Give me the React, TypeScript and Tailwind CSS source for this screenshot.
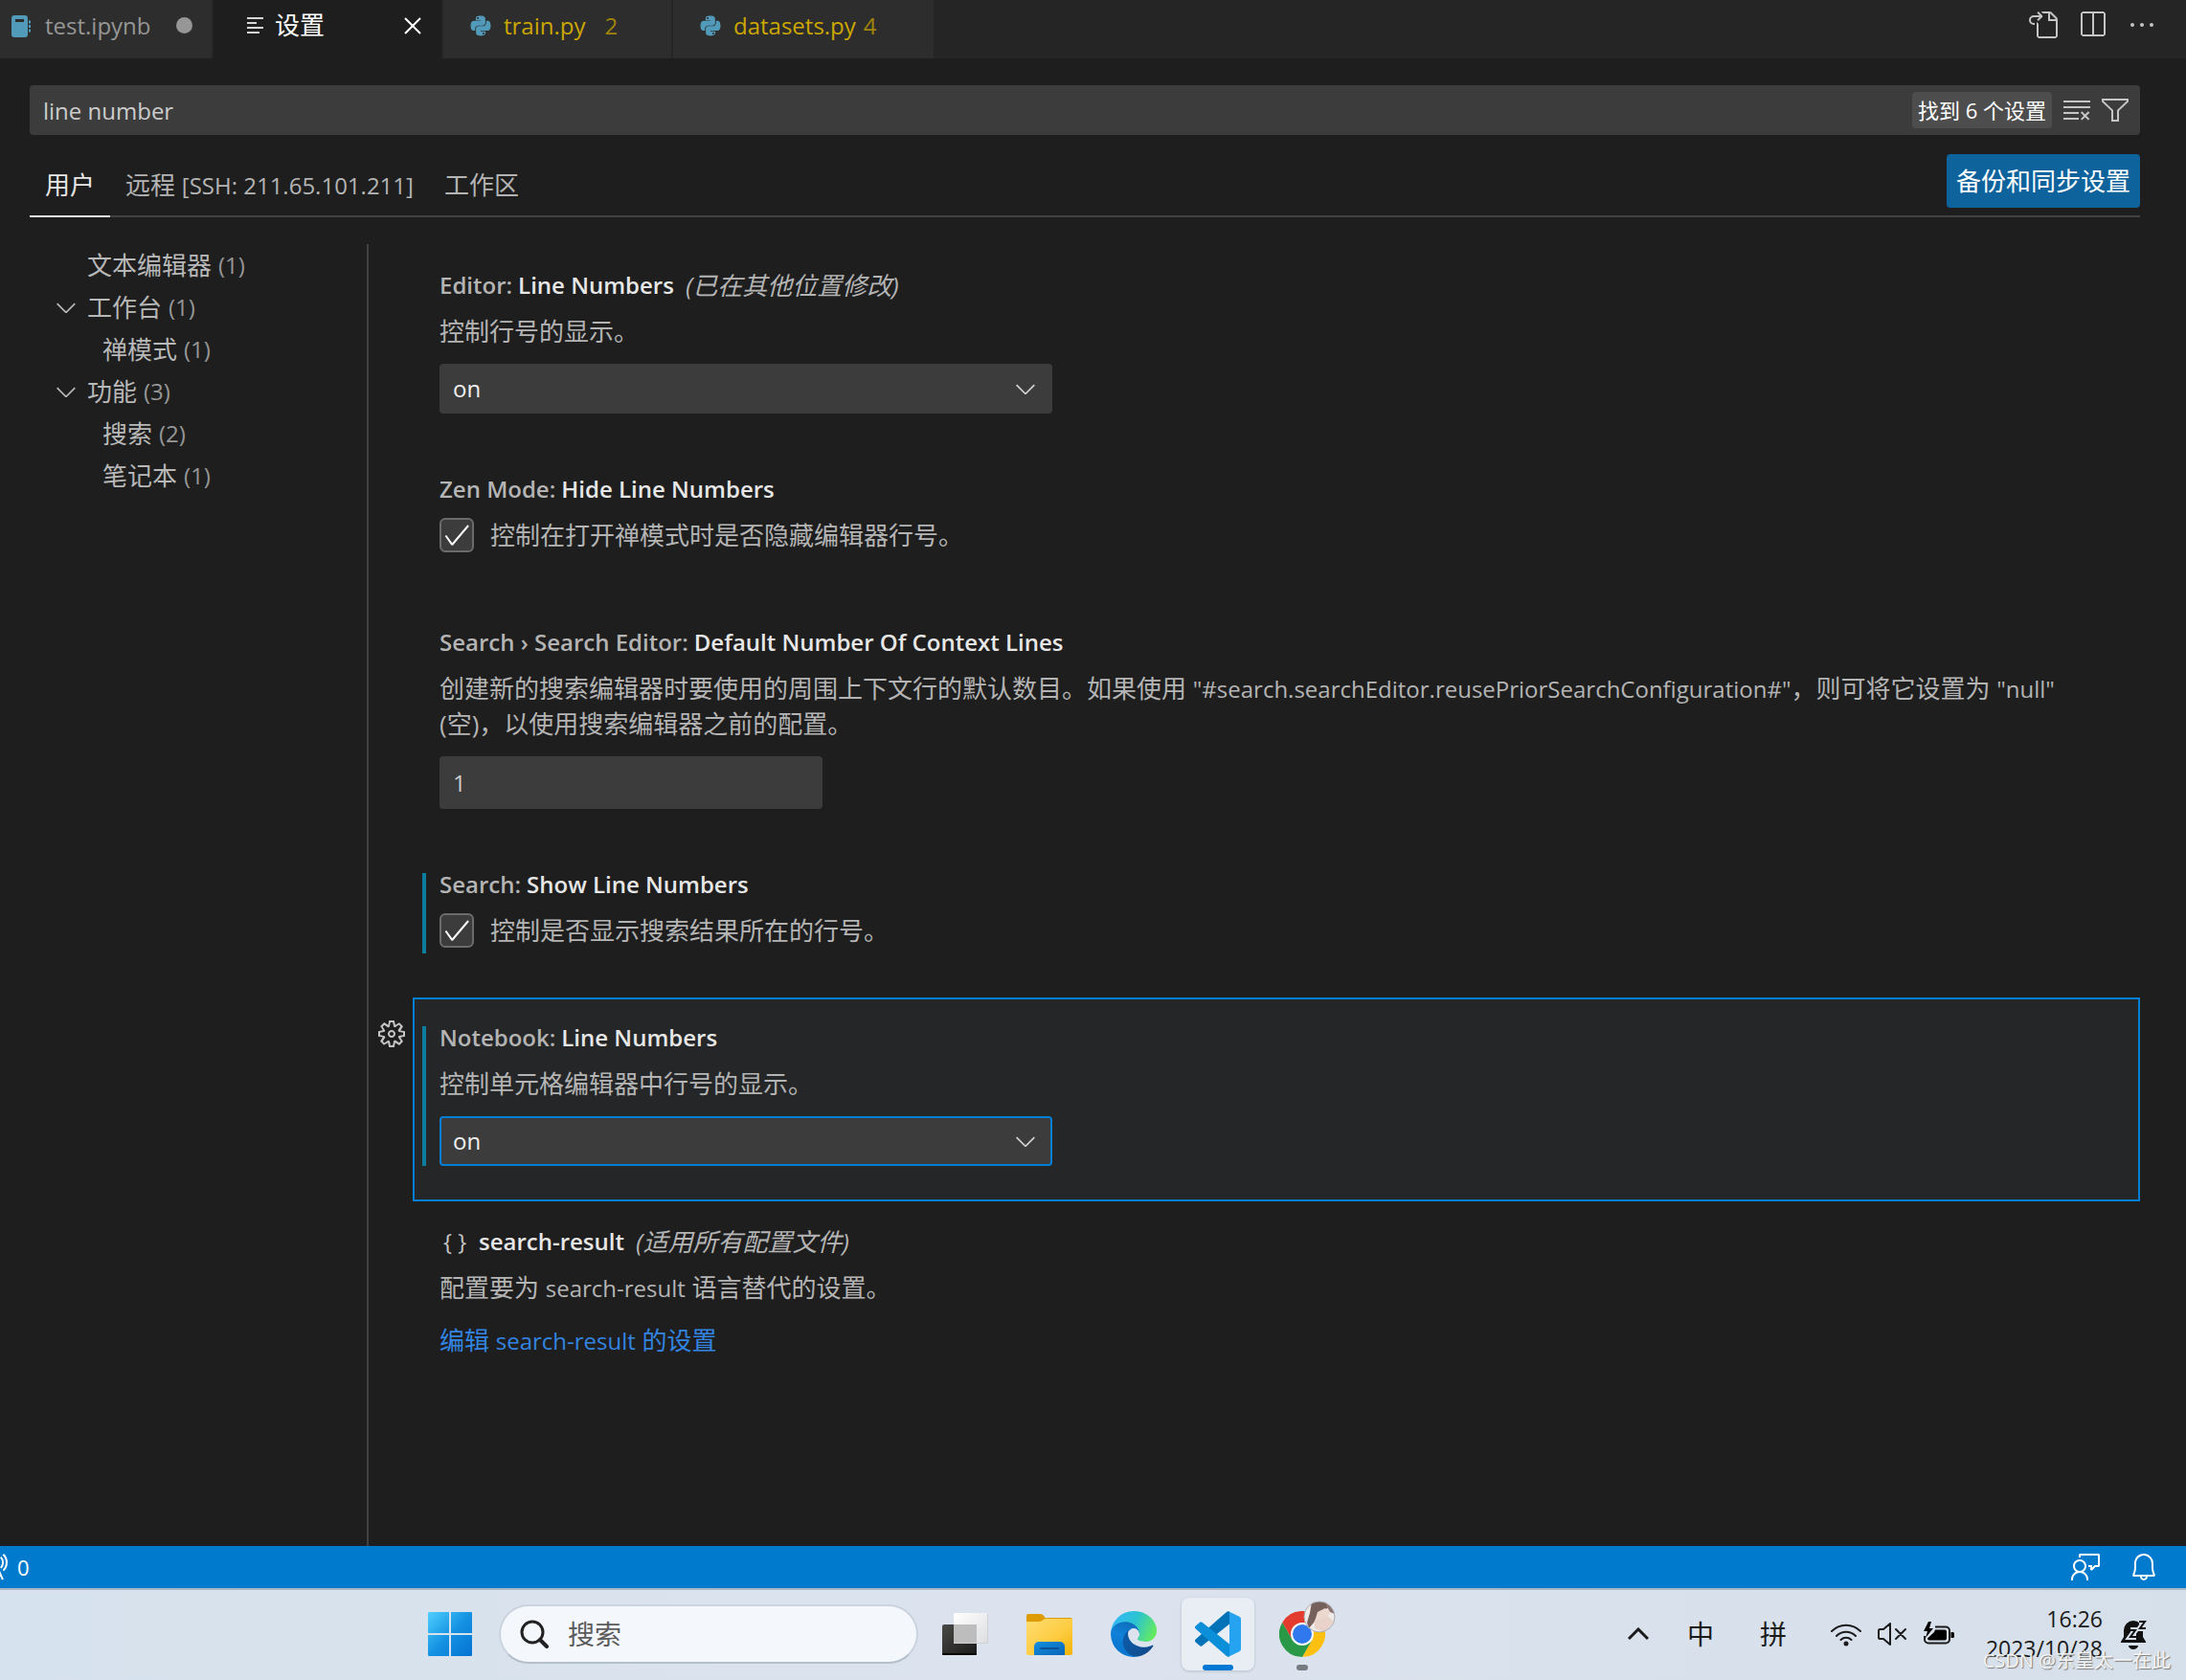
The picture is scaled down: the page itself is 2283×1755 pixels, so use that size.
import { useState } from "react";
import type { ReactNode } from "react";
import { FaPython } from "react-icons/fa";
import {
  VscBell,
  VscCheck,
  VscChevronDown,
  VscClearAll,
  VscClose,
  VscEllipsis,
  VscFeedback,
  VscFilter,
  VscGear,
  VscGoToFile,
  VscRadioTower,
  VscSplitHorizontal,
} from "react-icons/vsc";

const NotebookIcon = () => (
  <svg viewBox="0 0 20 24" className="w-5 h-6 shrink-0" fill="#519aba">
    <path
      fillRule="evenodd"
      d="M3 1h11a3 3 0 0 1 3 3v17a3 3 0 0 1-3 3H3a3 3 0 0 1-3-3V4a3 3 0 0 1 3-3zm1 4v3h9V5z"
    />
    <path d="M18 6.500h2v3h-2zM18 11h2v3h-2zM18 15.500h2v3h-2z" />
  </svg>
);

const SettingsListIcon = () => (
  <svg
    viewBox="0 0 18 20"
    className="w-[18px] h-5 shrink-0"
    stroke="#d4d7d6"
    strokeWidth="2"
  >
    <path d="M1 2h17M1 7h10M1 12h17M1 17h13" />
  </svg>
);

const WindowsLogo = () => (
  <svg viewBox="0 0 46 46" className="w-[46px] h-[46px]">
    <defs>
      <linearGradient id="win" x1="0" y1="0" x2="1" y2="1">
        <stop offset="0" stopColor="#4fd0ff" />
        <stop offset="0.5" stopColor="#1592e2" />
        <stop offset="1" stopColor="#0473d2" />
      </linearGradient>
    </defs>
    <path
      fill="url(#win)"
      d="M1 0h21v22H0V1a1 1 0 0 1 1-1zM24 0h21a1 1 0 0 1 1 1v21H24zM0 24h22v22H1a1 1 0 0 1-1-1zM24 24h22v21a1 1 0 0 1-1 1H24z"
    />
  </svg>
);

const SearchIcon = () => (
  <svg
    viewBox="0 0 30 30"
    className="w-[30px] h-[30px]"
    fill="none"
    stroke="#222"
    strokeWidth="3"
    strokeLinecap="round"
  >
    <circle cx="13" cy="13" r="11" />
    <path d="M21 21l7 7" strokeWidth="4" />
  </svg>
);

const TaskViewIcon = () => (
  <svg viewBox="0 0 48 48" className="w-12 h-12">
    <defs>
      <linearGradient id="tvDark" x1="0" y1="0" x2="1" y2="1">
        <stop offset="0" stopColor="#4a4a47" />
        <stop offset="1" stopColor="#1a1a1a" />
      </linearGradient>
      <linearGradient id="tvLight" x1="0" y1="0" x2="1" y2="1">
        <stop offset="0" stopColor="#ffffff" />
        <stop offset="1" stopColor="#dcdde0" />
      </linearGradient>
    </defs>
    <rect x="0" y="14" width="36" height="32" rx="2" fill="url(#tvDark)" />
    <rect x="0" y="44" width="36" height="2" rx="1" fill="#050505" />
    <rect x="12" y="2" width="36" height="32" rx="2" fill="url(#tvLight)" />
    <rect x="12" y="14" width="24" height="20" fill="#bdbdbd" />
    <path d="M12 33.500h35.500V3" fill="none" stroke="#cfd1d4" />
  </svg>
);

const FolderIcon = () => (
  <svg viewBox="0 0 48 48" className="w-12 h-12">
    <defs>
      <linearGradient id="folder" x1="0" y1="0" x2="1" y2="1">
        <stop offset="0" stopColor="#ffdd72" />
        <stop offset="0.6" stopColor="#fdcb3f" />
        <stop offset="1" stopColor="#f3b204" />
      </linearGradient>
      <linearGradient id="folderBlue" x1="0" y1="0" x2="1" y2="1">
        <stop offset="0" stopColor="#1390e0" />
        <stop offset="1" stopColor="#0a63b5" />
      </linearGradient>
    </defs>
    <path
      fill="#dd9b05"
      d="M0 5a2 2 0 0 1 2-2h12c2.500 0 4 1.500 5.500 4H46a2 2 0 0 1 2 2v8H0z"
    />
    <path
      fill="url(#folder)"
      d="M0 12a1 1 0 0 1 1-1h12.500c3 0 4-3 7-3H47a1 1 0 0 1 1 1v35a2 2 0 0 1-2 2H2a2 2 0 0 1-2-2z"
    />
    <path
      fill="url(#folderBlue)"
      d="M8 46V37a5 5 0 0 1 5-5h22a5 5 0 0 1 5 5v9z"
    />
    <path
      d="M15 39h18"
      stroke="#0b4f94"
      strokeWidth="2"
      strokeLinecap="round"
    />
  </svg>
);

const EdgeIcon = () => (
  <svg viewBox="0 0 256 256" className="w-12 h-12">
    <defs>
      <linearGradient id="edgeA" x1="0.2" y1="0.3" x2="1" y2="0.7">
        <stop offset="0" stopColor="#0c59a4" />
        <stop offset="1" stopColor="#114a8b" />
      </linearGradient>
      <linearGradient id="edgeB" x1="0.6" y1="0.1" x2="0.3" y2="1">
        <stop offset="0" stopColor="#0f6fbe" />
        <stop offset="0.4" stopColor="#1080d8" />
        <stop offset="1" stopColor="#0672cc" />
      </linearGradient>
      <linearGradient id="edgeC" x1="0" y1="0.3" x2="1" y2="0.6">
        <stop offset="0" stopColor="#35b8fa" />
        <stop offset="0.5" stopColor="#2bc3d2" />
        <stop offset="1" stopColor="#66eb5e" />
      </linearGradient>
    </defs>
    <path
      fill="url(#edgeA)"
      d="M231 190.500c-3.400 1.800-6.900 3.300-10.500 4.600a101.900 101.900 0 0 1-35.900 6.400c-47.300 0-88.500-32.500-88.500-74.300a31.500 31.500 0 0 1 16.400-27.300c-42.800 1.800-53.800 46.400-53.800 72.500 0 73.900 68.100 81.400 82.800 81.400 7.900 0 19.800-2.300 27-4.600l1.300-.4a128.300 128.300 0 0 0 66.600-52.800 4 4 0 0 0-5.400-5.500z"
    />
    <path
      fill="url(#edgeB)"
      d="M105.700 241.400a79.200 79.200 0 0 1-22.700-21.300 80.700 80.700 0 0 1 29.500-120.200c3.200-1.500 8.500-4.100 15.600-4a32.400 32.400 0 0 1 25.700 13 31.900 31.900 0 0 1 6.300 18.700c0-.2 24.500-79.600-80-79.600-43.900 0-80 41.600-80 78.200a130.200 130.200 0 0 0 12.100 56 128 128 0 0 0 156.400 67 75.600 75.600 0 0 1-62.900-7.800z"
    />
    <path
      fill="url(#edgeC)"
      d="M152.300 148.900c-.8 1-3.300 2.500-3.300 5.700 0 2.600 1.700 5.100 4.700 7.200 14.400 10 41.500 8.700 41.600 8.700a59.600 59.600 0 0 0 30.300-8.400 61.400 61.400 0 0 0 30.400-52.900c.3-22.400-8-37.300-11.300-43.900C223.500 23.900 177.700 0 128 0A128 128 0 0 0 0 126.200c.5-36.500 36.800-66 80-66 3.500 0 23.500.3 42 10.100 16.300 8.600 24.900 18.900 30.800 29.200 6.200 10.700 7.300 24.100 7.300 29.500 0 5.300-2.700 13.300-7.800 19.900z"
    />
  </svg>
);

const VsCodeLogo = () => (
  <svg viewBox="0 0 48 48" className="w-12 h-12">
    <path
      fill="#0072b8"
      d="M36 .5v13L7.500 36.200a2 2 0 0 1-2.700-.1L.7 32.400a2 2 0 0 1 0-3L33 .9A3 3 0 0 1 36 .5z"
    />
    <path
      fill="#0b8fd8"
      d="M36 47.500v-13L7.500 11.800a2 2 0 0 0-2.700.1L.7 15.600a2 2 0 0 0 0 3L33 47.100a3 3 0 0 0 3 .4z"
    />
    <path
      fill="#26a3f0"
      d="M35 .3L46.400 5.700A3 3 0 0 1 48 8.400v31.200a3 3 0 0 1-1.600 2.700L35 47.800a2 2 0 0 0 1-1.800V2a2 2 0 0 0-1-1.700z"
    />
  </svg>
);

const ChromeLogo = () => (
  <svg viewBox="0 0 48 48" className="w-12 h-12">
    <path fill="#e33b2e" d="M3.200 12A24 24 0 0 1 44.800 12H24L13.600 30z" />
    <path fill="#fdc010" d="M44.800 12A24 24 0 0 1 24 48L34.400 30 24 12z" />
    <path fill="#2a9947" d="M24 48A24 24 0 0 1 3.200 12L13.600 30h20.800z" />
    <circle cx="24" cy="24" r="12" fill="#fff" />
    <circle cx="24" cy="24" r="10" fill="#2f78ed" />
  </svg>
);

const Avatar = () => (
  <svg
    viewBox="0 0 34 34"
    className="absolute -top-[11px] -right-[11px] w-[34px] h-[34px]"
  >
    <defs>
      <clipPath id="face">
        <circle cx="17" cy="17" r="16" />
      </clipPath>
    </defs>
    <g clipPath="url(#face)">
      <rect width="34" height="34" fill="#efeae8" />
      <path d="M9 1h14l4 6-7 4-5 4-4 8-5 6-2-6 3-10z" fill="#75605c" />
      <path d="M15 12l8-4 5 4-3 7-8 4-4-4z" fill="#ecd8ce" />
      <path d="M12 21l13-5 7 6-9 11-11-4z" fill="#e8d2c9" />
      <path d="M23 2l6 3 4 9-5-2-3-5z" fill="#8d7671" />
    </g>
    <circle cx="17" cy="17" r="16" fill="none" stroke="#a9adb3" />
  </svg>
);

const WifiIcon = () => (
  <svg
    viewBox="0 0 32 28"
    className="w-8 h-7"
    fill="none"
    stroke="#1b1b1b"
    strokeWidth="2"
    strokeLinecap="round"
  >
    <path d="M1 11a21 21 0 0 1 30 0M6 16a14 14 0 0 1 20 0M10.500 20a8 8 0 0 1 11 0" />
    <circle cx="16" cy="24" r="2.500" fill="#1b1b1b" stroke="none" />
  </svg>
);

const MutedIcon = () => (
  <svg
    viewBox="0 0 32 28"
    className="w-8 h-7"
    fill="none"
    stroke="#1b1b1b"
    strokeWidth="2"
    strokeLinecap="round"
    strokeLinejoin="round"
  >
    <path d="M14 3v22l-7-6H3.500A1.500 1.500 0 0 1 2 17.500v-7A1.500 1.500 0 0 1 3.500 9H7zM20 9l10 10M30 9L20 19" />
  </svg>
);

const BatteryIcon = () => (
  <svg viewBox="0 0 34 28" className="w-[34px] h-7">
    <path
      d="M13 6.500h11a4 4 0 0 1 4 4v9a4 4 0 0 1-4 4H6a4 4 0 0 1-4-4V16"
      fill="none"
      stroke="#1b1b1b"
      strokeWidth="2"
    />
    <path d="M13 9.500h10a2 2 0 0 1 2 2v7a2 2 0 0 1-2 2H7a2 2 0 0 1-2-2L12 12z" />
    <path d="M29.500 12h2a1.500 1.500 0 0 1 1.500 1.500v3a1.500 1.500 0 0 1-1.500 1.500h-2z" />
    <path d="M6 1L1 11h4l-2 7 8-10H7l2-7z" />
  </svg>
);

const BellSnoozeIcon = () => (
  <svg viewBox="0 0 28 32" className="w-7 h-8" fill="#111">
    <path d="M14 2A10 10 0 0 0 4 12v7l-3 5v1h26v-1l-3-5v-7A10 10 0 0 0 14 2zM9 28a5 4 0 0 0 10 0z" />
    <path
      d="M11 12h5l-5 7h6M20 3h6l-5 7h6"
      fill="none"
      stroke="#d6e0ea"
      strokeWidth="6"
    />
    <path
      d="M10 12h6l-5 7h6M20 3h6l-5 7h6"
      fill="none"
      stroke="#111"
      strokeWidth="2"
    />
  </svg>
);

// latin text sits next to 26px chinese glyphs
const Latin = ({ children }: { children: ReactNode }) => (
  <span className="text-[24px]">{children}</span>
);

const tocItems = [
  { name: "文本编辑器", count: 1, parent: false, child: false },
  { name: "工作台", count: 1, parent: true, child: false },
  { name: "禅模式", count: 1, parent: false, child: true },
  { name: "功能", count: 3, parent: true, child: false },
  { name: "搜索", count: 2, parent: false, child: true },
  { name: "笔记本", count: 1, parent: false, child: true },
];

const EditorTabs = () => (
  <div className="flex items-stretch justify-between bg-[#252526] h-[61px]">
    <div className="flex items-stretch gap-[2px] text-[24px]">
      <button className="flex items-center w-[221px] pl-3 pr-5 pb-2 bg-[#2d2d2d] text-[#969696]">
        <NotebookIcon />
        <span className="ml-[15px]">test.ipynb</span>
        <span className="ml-auto size-[17px] rounded-full bg-[#969696]" />
      </button>
      <button className="flex items-center w-[238px] pl-[34px] pr-[14px] pb-2 bg-[#1e1e1e] text-white">
        <SettingsListIcon />
        <span className="ml-3 text-[26px]">设置</span>
        <VscClose className="ml-auto size-8" />
      </button>
      <button className="flex items-center w-[238px] pl-[27px] pb-2 bg-[#2d2d2d] text-[#cca700]">
        <FaPython className="size-6 text-[#519aba]" />
        <span className="ml-3">train.py</span>
        <span className="ml-5 text-[#a08509]">2</span>
      </button>
      <button className="flex items-center w-[272px] pl-[27px] pb-2 bg-[#2d2d2d] text-[#cca700]">
        <FaPython className="size-6 text-[#519aba]" />
        <span className="ml-3">datasets.py</span>
        <span className="ml-2 text-[#a08509]">4</span>
      </button>
    </div>
    <div className="flex items-center gap-5 pr-[30px] pb-[10px] text-[#c5c5c5]">
      <button aria-label="打开设置">
        <VscGoToFile className="size-8" />
      </button>
      <button aria-label="拆分编辑器">
        <VscSplitHorizontal className="size-8" />
      </button>
      <button aria-label="更多操作">
        <VscEllipsis className="size-8" />
      </button>
    </div>
  </div>
);

const SearchHeader = () => {
  const [query, setQuery] = useState("line number");

  return (
    <header className="pl-[31px] pr-12 pt-7">
      <div className="flex items-center h-[52px] rounded bg-[#3c3c3c] pr-[10px] text-[#c5c5c5]">
        <input
          aria-label="搜索设置"
          className="flex-1 h-full pl-[14px] bg-transparent text-[24px] text-[#cccccc] outline-none"
          value={query}
          onChange={(e) => setQuery(e.target.value)}
        />
        <span className="flex items-center h-[38px] px-[6px] mr-[10px] rounded bg-[#4d4d4d] text-[22px] text-white">
          找到 6 个设置
        </span>
        <button aria-label="清除搜索" className="mr-2">
          <VscClearAll className="size-8" />
        </button>
        <button aria-label="筛选">
          <VscFilter className="size-8" />
        </button>
      </div>

      <div className="flex items-stretch justify-between mt-5 border-b-2 border-[#414141]">
        <div className="flex items-stretch text-[26px] text-[#b4b4b4]">
          <button className="-mb-[2px] px-4 border-b-2 border-[#e7e7e7] text-[#e7e7e7]">
            用户
          </button>
          <button className="px-4">
            远程 <Latin>[SSH: 211.65.101.211]</Latin>
          </button>
          <button className="px-4">工作区</button>
        </div>
        <button className="h-14 mb-2 px-[10px] rounded bg-[#0e639c] text-[26px] text-white">
          备份和同步设置
        </button>
      </div>
    </header>
  );
};

const Toc = () => (
  <nav className="w-[385px] shrink-0 border-r-2 border-[#414141] pl-[53px]">
    {tocItems.map((item) => (
      <a
        key={item.name}
        href="#settings"
        className={
          item.child
            ? "flex items-center h-11 pl-[54px] text-[26px] text-[#b8b8b8]"
            : "flex items-center h-11 text-[26px] text-[#b8b8b8]"
        }
      >
        {!item.child && (
          <span className="w-[38px]">
            {item.parent && <VscChevronDown className="size-8" />}
          </span>
        )}
        {item.name}
        <span className="ml-[7px] text-[24px] text-[#969696]">
          ({item.count})
        </span>
      </a>
    ))}
  </nav>
);

type SettingProps = {
  category?: string;
  name: string;
  note?: string;
  icon?: boolean;
  modified?: boolean;
  focused?: boolean;
  className?: string;
  children: ReactNode;
};

const Setting = ({
  category,
  name,
  note,
  icon,
  modified,
  focused,
  className = "pb-[37px]",
  children,
}: SettingProps) => (
  <section
    className={
      focused
        ? "relative pl-7 pr-16 pt-6 bg-[#252628] outline-2 -outline-offset-2 outline-[#007fd4] " +
          className
        : "relative pl-7 pr-16 pt-6 " + className
    }
  >
    {focused && (
      <button
        aria-label="更多操作"
        className="absolute -left-[38px] top-[22px] text-[#c5c5c5]"
      >
        <VscGear className="size-8" />
      </button>
    )}
    <div className="relative">
      {modified && (
        <div className="absolute -left-[18px] top-[6px] bottom-0 w-1 bg-[#0c7d9d]" />
      )}
      <h3 className="flex items-center h-9 text-[24px] font-semibold text-[#e7e7e7]">
        {icon && (
          <span className="w-[41px] pl-1 font-normal text-[#c5c5c5]">
            {"{ }"}
          </span>
        )}
        {category && (
          <span className="mr-[6px] text-[#b4b4b4]">{category}</span>
        )}
        {name}
        {note && (
          <em className="ml-3 text-[26px] font-normal text-[#b4b4b4]">
            {note}
          </em>
        )}
      </h3>
      <div className="mt-3 text-[26px] leading-9 text-[#b4b4b4]">
        {children}
      </div>
    </div>
  </section>
);

const OnOffSelect = ({
  label,
  focused,
}: {
  label: string;
  focused?: boolean;
}) => {
  const [value, setValue] = useState("on");

  return (
    <div className="relative w-[640px] mt-4">
      <select
        aria-label={label}
        value={value}
        onChange={(e) => setValue(e.target.value)}
        className={
          focused
            ? "block w-full h-[52px] pl-3 appearance-none rounded border-2 border-[#007fd4] bg-[#3c3c3c] text-[24px] text-[#f0f0f0] outline-none"
            : "block w-full h-[52px] pl-3 appearance-none rounded border-2 border-[#3c3c3c] bg-[#3c3c3c] text-[24px] text-[#f0f0f0] outline-none"
        }
      >
        <option>on</option>
        <option>off</option>
      </select>
      <VscChevronDown className="absolute right-3 top-[10px] size-8 text-[#d0d0d0] pointer-events-none" />
    </div>
  );
};

const CheckRow = ({ text }: { text: string }) => {
  const [checked, setChecked] = useState(true);

  return (
    <label className="flex items-center gap-[17px] pb-[6px]">
      <span className="relative size-9 shrink-0">
        <input
          type="checkbox"
          checked={checked}
          onChange={() => setChecked((prev) => !prev)}
          className="block size-9 appearance-none rounded-md border-2 border-[#6b6b6b] bg-[#3c3c3c]"
        />
        {checked && (
          <VscCheck className="absolute left-[2px] top-[2px] size-8 text-white pointer-events-none" />
        )}
      </span>
      {text}
    </label>
  );
};

const SettingsList = () => (
  <main id="settings" className="flex-1 pl-[46px] pr-12 pt-px">
    <Setting category="Editor:" name="Line Numbers" note="(已在其他位置修改)">
      <p>控制行号的显示。</p>
      <OnOffSelect label="Editor: Line Numbers" />
    </Setting>
    <Setting
      category="Zen Mode:"
      name="Hide Line Numbers"
      className="pb-[46px]"
    >
      <CheckRow text="控制在打开禅模式时是否隐藏编辑器行号。" />
    </Setting>
    <Setting
      category="Search › Search Editor:"
      name="Default Number Of Context Lines"
    >
      <p>
        创建新的搜索编辑器时要使用的周围上下文行的默认数目。如果使用{" "}
        <Latin>"#search.searchEditor.reusePriorSearchConfiguration#"</Latin>
        ，则可将它设置为 <Latin>"null"</Latin> (空)，以使用搜索编辑器之前的配置。
      </p>
      <input
        aria-label="Default Number Of Context Lines"
        type="text"
        defaultValue="1"
        className="block w-[400px] h-[55px] mt-4 pl-[14px] rounded bg-[#3c3c3c] text-[24px] text-[#cccccc] outline-none"
      />
    </Setting>
    <Setting
      category="Search:"
      name="Show Line Numbers"
      modified
      className="pb-[46px]"
    >
      <CheckRow text="控制是否显示搜索结果所在的行号。" />
    </Setting>
    <Setting category="Notebook:" name="Line Numbers" modified focused>
      <p>控制单元格编辑器中行号的显示。</p>
      <OnOffSelect label="Notebook: Line Numbers" focused />
    </Setting>
    <Setting name="search-result" note="(适用所有配置文件)" icon>
      <p>
        配置要为 <Latin>search-result</Latin> 语言替代的设置。
      </p>
      <a href="#settings" className="block mt-[18px] text-[#3284e0]">
        编辑 <Latin>search-result</Latin> 的设置
      </a>
    </Setting>
  </main>
);

const StatusBar = () => (
  <footer className="flex items-center justify-between h-11 pr-7 bg-[#007acc] text-[22px] text-white">
    <button className="flex items-center">
      <VscRadioTower className="size-8 -ml-[22px] mr-2" />0
    </button>
    <div className="flex items-center gap-7">
      <button aria-label="反馈">
        <VscFeedback className="size-8" />
      </button>
      <button aria-label="通知">
        <VscBell className="size-8" />
      </button>
    </div>
  </footer>
);

const Taskbar = () => (
  <div className="relative flex items-center justify-between h-24 pl-[447px] pr-[41px] pb-[2px] border-t-2 border-[#a9b7c6] bg-linear-to-r from-[#d6e2ed] via-[#dce3ee] to-[#d6e0ea] text-[#1b1b1b]">
    <div className="flex items-center">
      <button aria-label="开始">
        <WindowsLogo />
      </button>
      <label className="flex items-center w-[438px] h-[62px] ml-7 mr-[25px] pl-5 rounded-full border-2 border-[#cbd4de] border-b-[#b4bfcc] bg-[#f4f7fb]">
        <SearchIcon />
        <input
          aria-label="搜索"
          placeholder="搜索"
          className="w-[300px] ml-5 bg-transparent text-[28px] placeholder:text-[#5c5c5c] outline-none"
        />
      </label>
      <div className="flex items-center gap-10">
        <button aria-label="任务视图">
          <TaskViewIcon />
        </button>
        <button aria-label="文件资源管理器">
          <FolderIcon />
        </button>
        <button aria-label="Edge">
          <EdgeIcon />
        </button>
        <button
          aria-label="Visual Studio Code"
          className="relative -mx-[14px] p-[14px] rounded-lg bg-[#e9eef5] shadow-[0_1px_2px_1px_#c5ced9]"
        >
          <VsCodeLogo />
          <span className="absolute left-[22px] bottom-0 w-8 h-[6px] rounded-full bg-[#0078d4]" />
        </button>
        <button aria-label="Chrome" className="relative">
          <ChromeLogo />
          <Avatar />
          <span className="absolute left-[18px] -bottom-[14px] w-3 h-[6px] rounded-full bg-[#767b80]" />
        </button>
      </div>
    </div>

    <div className="flex items-center text-[28px]">
      <button aria-label="显示隐藏的图标" className="mr-10">
        <svg
          viewBox="0 0 22 14"
          className="w-[22px] h-[14px]"
          fill="none"
          stroke="#1b1b1b"
          strokeWidth="3"
        >
          <path d="M1 12L11 2l10 10" />
        </svg>
      </button>
      <button className="mr-12">中</button>
      <button className="mr-[46px]">拼</button>
      <button aria-label="网络、音量和电池" className="flex items-center gap-4">
        <WifiIcon />
        <MutedIcon />
        <BatteryIcon />
      </button>
      <button className="ml-8 mr-[18px] text-right text-[23px] leading-[31px]">
        16:26
        <br />
        2023/10/28
      </button>
      <button aria-label="通知">
        <BellSnoozeIcon />
      </button>
    </div>

    <span className="absolute right-4 bottom-2 text-[20px] leading-6 text-[#f4f4f4] [text-shadow:1px_1px_1px_#777]">
      CSDN @东皇太一在此
    </span>
  </div>
);

const App = () => (
  <div className="flex flex-col min-h-screen bg-[#1e1e1e] font-['Open_Sans','Noto_Sans_CJK_SC',sans-serif]">
    <EditorTabs />
    <SearchHeader />
    <div className="flex flex-1 mt-7">
      <Toc />
      <SettingsList />
    </div>
    <StatusBar />
    <Taskbar />
  </div>
);

export default App;
